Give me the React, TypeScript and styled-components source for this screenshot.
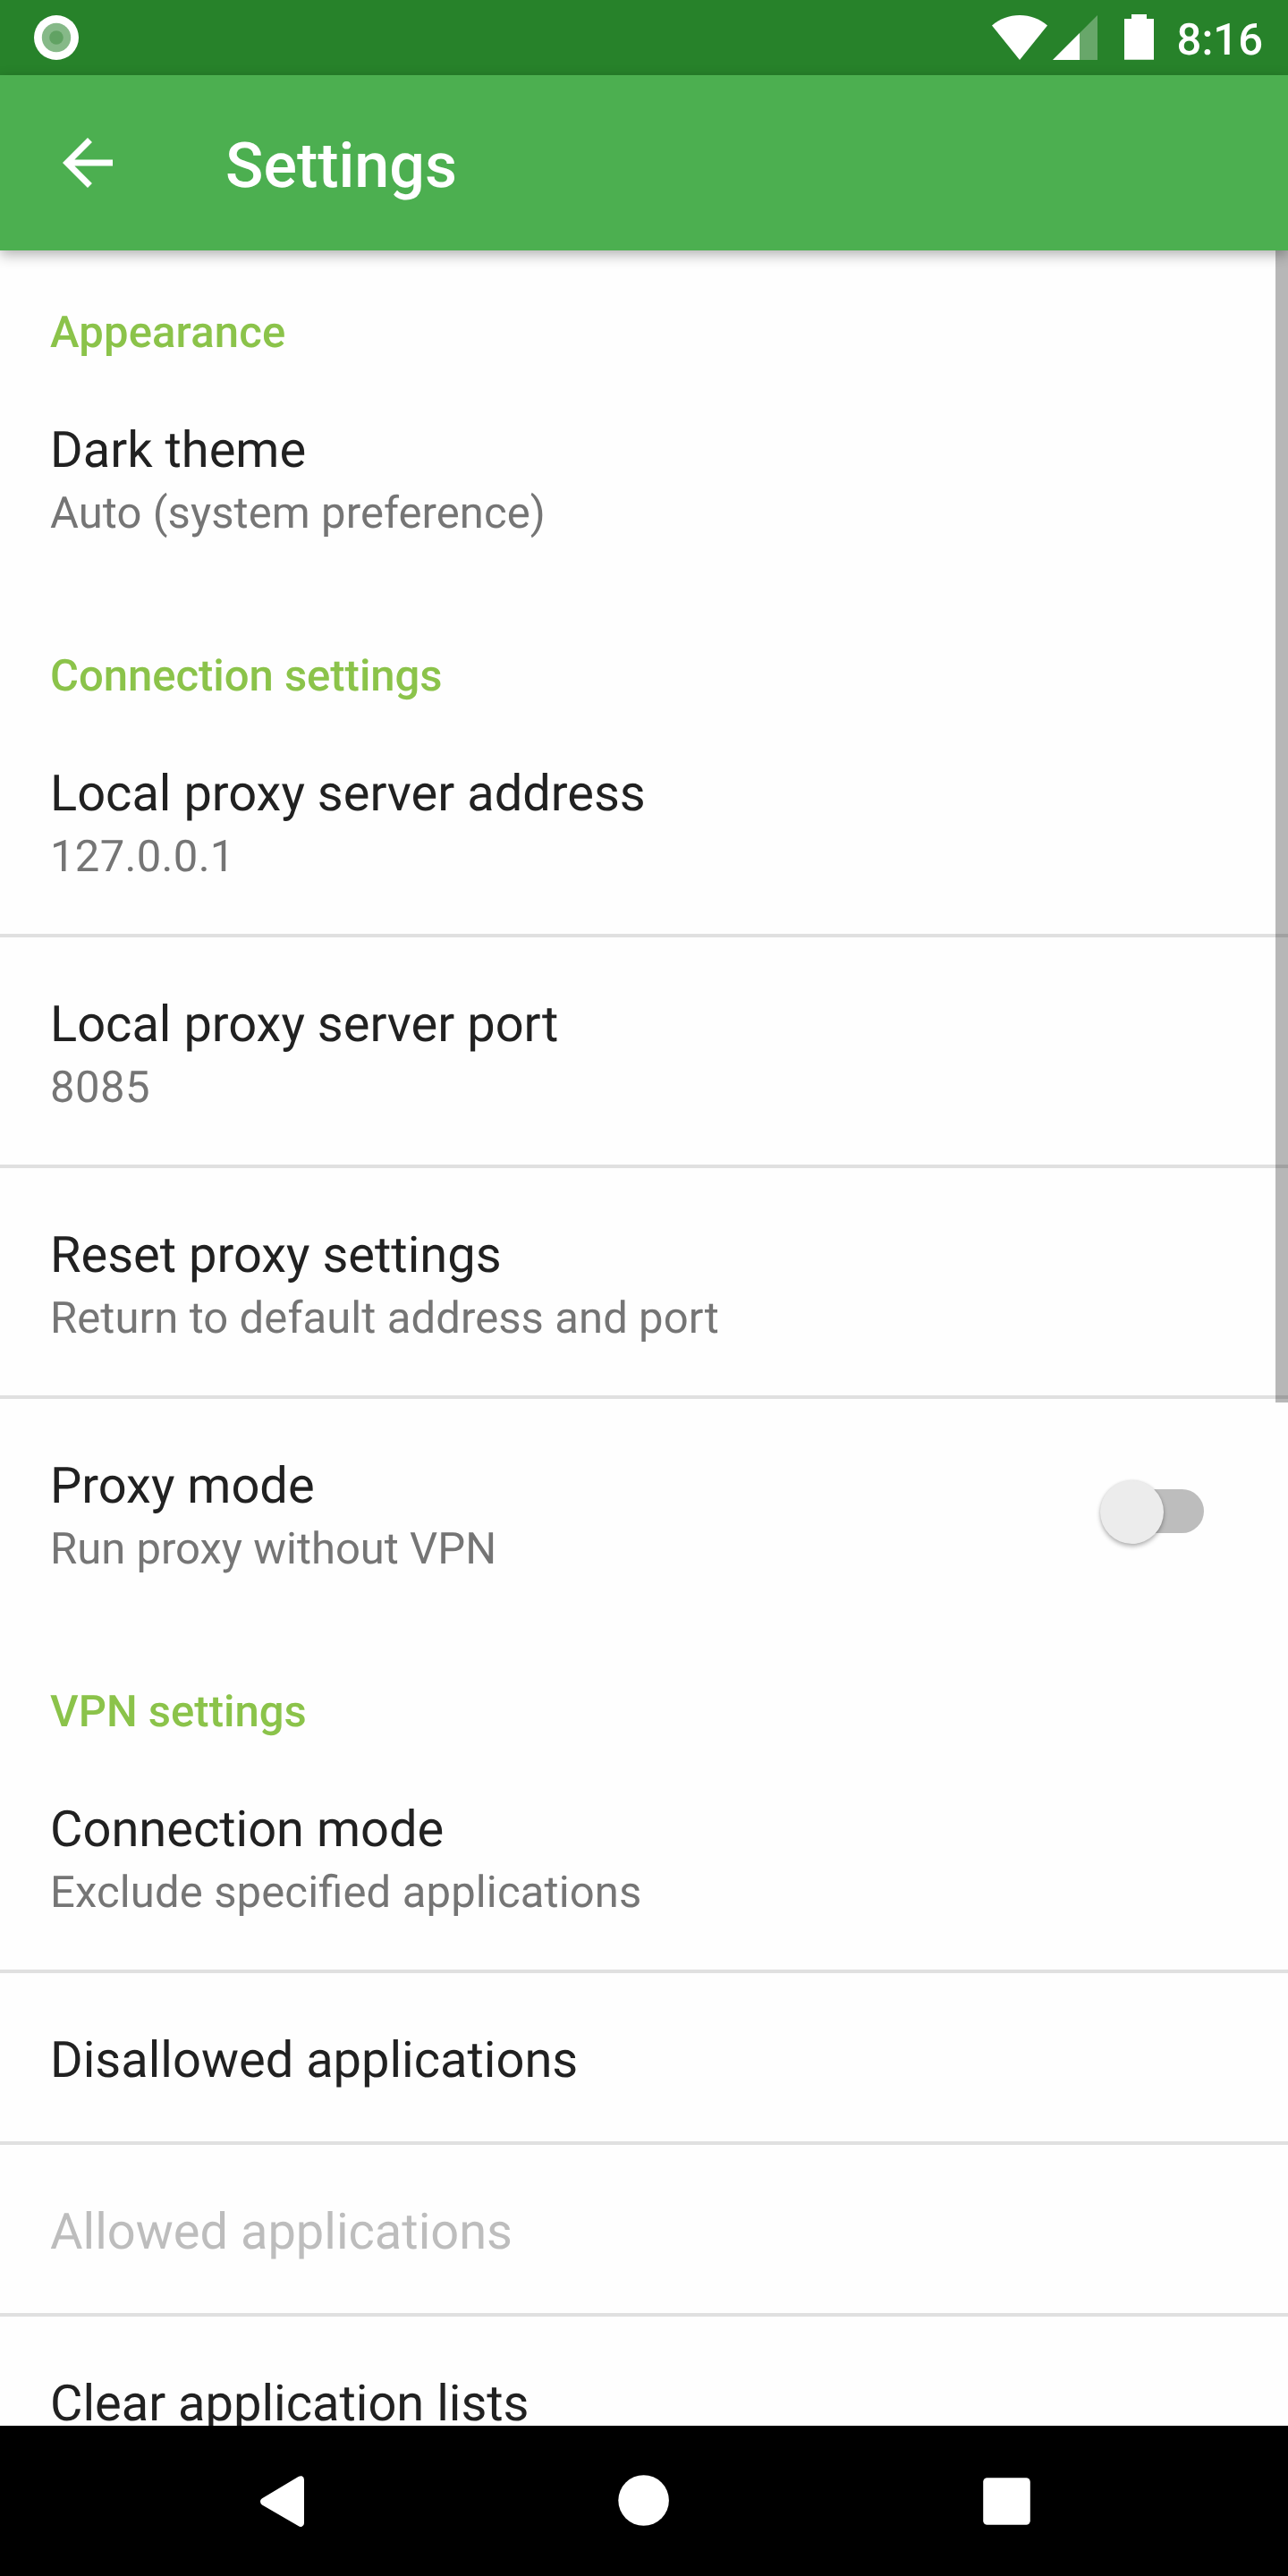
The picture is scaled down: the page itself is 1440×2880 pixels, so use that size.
import React from 'react';
import styled, { createGlobalStyle } from 'styled-components';

const GlobalStyle = createGlobalStyle`
  html, body { margin: 0; padding: 0; background: #fefefe; }
  *, *::before, *::after { box-sizing: border-box; }
`;

const Screen = styled.div`
  width: 1440px;
  height: 2880px;
  display: flex;
  flex-direction: column;
  overflow: hidden;
  background: #fefefe;
  font-family: Roboto, 'Noto Sans', sans-serif;
  text-rendering: geometricPrecision;
`;

const StatusBar = styled.header`
  flex: none;
  height: 84px;
  display: flex;
  align-items: center;
  justify-content: space-between;
  padding: 0 28px 0 35px;
  background: #27822a;
  color: #fff;
`;

const StatusIcons = styled.div`
  display: flex;
  align-items: center;
`;

const Clock = styled.time`
  margin-left: 7px;
  font-size: 49px;
  font-weight: 500;
  line-height: 57px;
  padding-top: 5px;
`;

const Glyph = styled.svg`
  display: block;
  flex: none;
`;

const AppBar = styled.div`
  flex: none;
  position: relative;
  z-index: 1;
  height: 196px;
  display: flex;
  align-items: center;
  padding-left: 56px;
  background: #4caf50;
  color: #fff;
  box-shadow: 0 5px 14px rgba(0, 0, 0, 0.3);
`;

const BackButton = styled.button`
  border: 0;
  padding: 0;
  background: none;
  color: inherit;
`;

const Title = styled.h1`
  margin: 7px 0 0 112px;
  font-size: 70px;
  font-weight: 500;
  line-height: 82px;
`;

const Body = styled.main`
  flex: 1;
  min-height: 0;
  position: relative;
  overflow: hidden;
`;

const Scrollbar = styled.div`
  position: absolute;
  top: 0;
  right: 0;
  width: 14px;
  height: 1288px;
  background: rgba(0, 0, 0, 0.28);
`;

const Section = styled.section`
  margin-bottom: 4px;
`;

const SectionTitle = styled.h2<{ $tracking?: number }>`
  height: 126px;
  margin: 0;
  padding: 63px 56px 0;
  font-size: 49px;
  font-weight: 500;
  line-height: 57px;
  letter-spacing: ${(p) => p.$tracking ?? 0}px;
  color: #8bc34a;
`;

const Row = styled.div`
  display: flex;
  align-items: flex-start;
  justify-content: space-between;
  padding: 64px 91px 0 56px;
  height: 254px;
  & + & {
    border-top: 4px solid #e0e0e0;
    height: 258px;
  }
`;

const CompactRow = styled(Row)`
  && {
    height: 192px;
    border-top: 4px solid #e0e0e0;
  }
`;

const Label = styled.div<{ $disabled?: boolean }>`
  font-size: 56px;
  line-height: 66px;
  color: ${(p) => (p.$disabled ? '#bdbdbd' : '#212121')};
`;

const Summary = styled.div<{ $tracking?: number }>`
  margin-top: 9px;
  font-size: 49px;
  line-height: 57px;
  letter-spacing: ${(p) => p.$tracking ?? 0}px;
  font-feature-settings: 'liga' 1;
  color: #757575;
`;

const SwitchTrack = styled.div`
  display: flex;
  align-items: center;
  width: 106px;
  height: 49px;
  margin: 37px 3px 0 0;
  border-radius: 25px;
  background: #bdbdbd;
`;

const SwitchThumb = styled.div`
  flex: none;
  width: 71px;
  height: 71px;
  margin: 2px 0 0 -10px;
  border-radius: 50%;
  background: #ececec;
  box-shadow: 0 3px 5px rgba(0, 0, 0, 0.28), 0 0 3px rgba(0, 0, 0, 0.1);
`;

const NavBar = styled.nav`
  flex: none;
  height: 168px;
  display: flex;
  justify-content: center;
  background: #000;
`;

const NavButton = styled.button`
  width: 405px;
  border: 0;
  padding: 0;
  display: flex;
  align-items: center;
  justify-content: center;
  background: none;
  color: #fff;
`;

type Item = { label: string; summary?: string; tracking?: number; toggle?: boolean; disabled?: boolean };

const sections: { title: string; tracking?: number; items: Item[] }[] = [
  {
    title: 'Appearance',
    tracking: 0.16,
    items: [{ label: 'Dark theme', summary: 'Auto (system preference)', tracking: 0.08 }],
  },
  {
    title: 'Connection settings',
    tracking: -0.03,
    items: [
      { label: 'Local proxy server address', summary: '127.0.0.1', tracking: 0.3 },
      { label: 'Local proxy server port', summary: '8085', tracking: 0.45 },
      { label: 'Reset proxy settings', summary: 'Return to default address and port', tracking: 0.09 },
      { label: 'Proxy mode', summary: 'Run proxy without VPN', toggle: true },
    ],
  },
  {
    title: 'VPN settings',
    items: [
      { label: 'Connection mode', summary: 'Exclude specified applications', tracking: 0.14 },
      { label: 'Disallowed applications' },
      { label: 'Allowed applications', disabled: true },
      { label: 'Clear application lists' },
    ],
  },
];

function SettingRow({ label, summary, tracking, toggle, disabled }: Item) {
  const Container = summary ? Row : CompactRow;
  return (
    <Container>
      <div>
        <Label $disabled={disabled}>{label}</Label>
        {summary && <Summary $tracking={tracking}>{summary}</Summary>}
      </div>
      {toggle && (
        <SwitchTrack role="switch" aria-checked={false}>
          <SwitchThumb />
        </SwitchTrack>
      )}
    </Container>
  );
}

export default function App() {
  return (
    <Screen>
      <GlobalStyle />
      <StatusBar>
        <Glyph width="56" height="56" viewBox="0 0 56 56">
          <circle cx="28" cy="28" r="25" fill="#fff" />
          <circle cx="28" cy="28" r="16.2" fill="#86b988" />
          <circle cx="28" cy="28" r="7.8" fill="#61a263" />
        </Glyph>
        <StatusIcons>
          <Glyph width="200" height="84" viewBox="1109 0 200 84" fill="#fff">
            <path d="M1140 67 1109 28.5C1118 21 1128 17 1140 17s22 4 31 11.500Z" />
            <path d="M1227 17V67H1177Z" fillOpacity="0.3" />
            <path d="M1207 37V67H1177Z" />
            <path d="M1265 16h17v5h8v45.700h-33V21h8Z" />
          </Glyph>
          <Clock>8:16</Clock>
        </StatusIcons>
      </StatusBar>
      <AppBar>
        <BackButton aria-label="Back">
          <Glyph width="84" height="84" viewBox="0 0 24 24" fill="currentColor">
            <path d="M20 11H7.830l5.590-5.590L12 4l-8 8 8 8 1.410-1.410L7.830 13H20v-2z" />
          </Glyph>
        </BackButton>
        <Title>Settings</Title>
      </AppBar>
      <Body>
        {sections.map((s) => (
          <Section key={s.title}>
            <SectionTitle $tracking={s.tracking}>{s.title}</SectionTitle>
            {s.items.map((item) => (
              <SettingRow key={item.label} {...item} />
            ))}
          </Section>
        ))}
        <Scrollbar />
      </Body>
      <NavBar>
        <NavButton aria-label="Back">
          <Glyph width="84" height="84" viewBox="0 0 84 84" fill="currentColor">
            <path d="M20 39.200 60.500 15Q62.500 13.800 64.500 14.300 67 15.200 67 18.500V67Q67 70 64.500 70.700 62.500 71.300 60.500 70L20 46.500Q18 45 18 42.800T20 39.200Z" />
          </Glyph>
        </NavButton>
        <NavButton aria-label="Home">
          <Glyph width="84" height="84" viewBox="0 0 84 84" fill="currentColor">
            <circle cx="41.600" cy="41.500" r="28.300" />
          </Glyph>
        </NavButton>
        <NavButton aria-label="Recents">
          <Glyph width="84" height="84" viewBox="0 0 84 84" fill="currentColor">
            <rect x="16.200" y="16.200" width="52.600" height="52.600" rx="4.500" />
          </Glyph>
        </NavButton>
      </NavBar>
    </Screen>
  );
}
